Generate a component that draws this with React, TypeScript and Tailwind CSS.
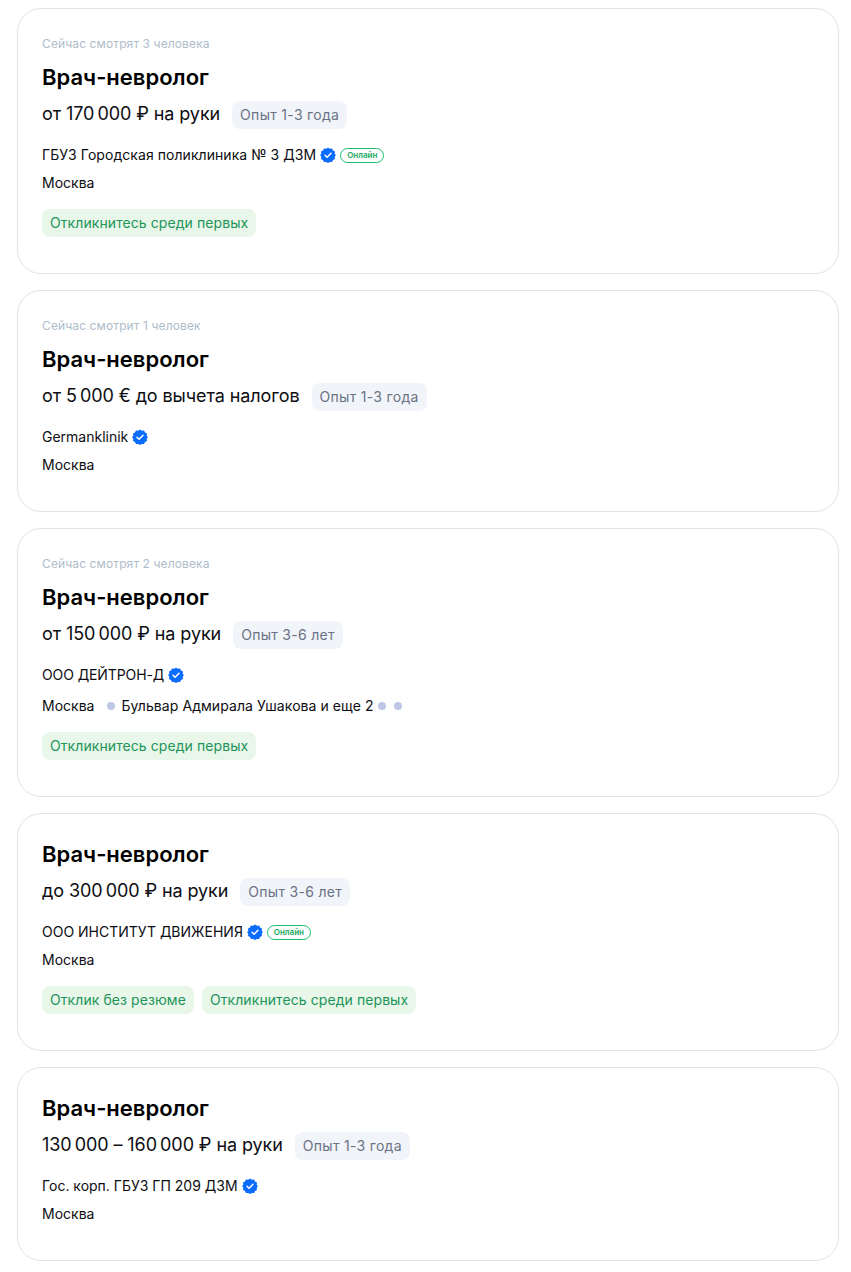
import React from "react";

function Verified() {
  return (
    <svg width="16" height="16" viewBox="0 0 16 16" className="shrink-0 ml-1">
      <path
        d="M8 .6l1.9 1.2 2.2-.2.9 2 2 1-.3 2.2L15.9 8l-1.2 1.9.3 2.2-2 1-.9 2-2.2-.2L8 16l-1.9-1.1-2.2.2-.9-2-2-1 .3-2.2L.1 8l1.2-1.2L1 4.6l2-1 .9-2 2.2.2z"
        fill="#0a6cff"
      />
      <path d="M5 8.2l2.1 2L11 6.3" fill="none" stroke="#fff" strokeWidth="1.5" strokeLinecap="round" strokeLinejoin="round" />
    </svg>
  );
}

function Chip({ children }: { children: React.ReactNode }) {
  return (
    <span className="h-7 px-2 rounded-lg bg-[#e8f7e9] text-[#22945a] text-sm leading-7 tracking-[0.08px]">{children}</span>
  );
}

type Job = {
  views?: string;
  salary: string;
  exp: string;
  company: string;
  companyClass?: string;
  online?: boolean;
  metro?: boolean;
  chips?: string[];
};

const N = "\u2009";

const jobs: Job[] = [
  { views: "Сейчас смотрят 3 человека", salary: `от 170${N}000 ₽ на руки`, exp: "Опыт 1-3 года", company: "ГБУЗ Городская поликлиника № 3 ДЗМ", companyClass: "tracking-[0.06px]", online: true, chips: ["Откликнитесь среди первых"] },
  { views: "Сейчас смотрит 1 человек", salary: `от 5${N}000 € до вычета налогов`, exp: "Опыт 1-3 года", company: "Germanklinik" },
  { views: "Сейчас смотрят 2 человека", salary: `от 150${N}000 ₽ на руки`, exp: "Опыт 3-6 лет", company: "ООО ДЕЙТРОН-Д", companyClass: "tracking-[-0.1px]", metro: true, chips: ["Откликнитесь среди первых"] },
  { salary: `до 300${N}000 ₽ на руки`, exp: "Опыт 3-6 лет", company: "ООО ИНСТИТУТ ДВИЖЕНИЯ", online: true, chips: ["Отклик без резюме", "Откликнитесь среди первых"] },
  { salary: `130${N}000 – 160${N}000 ₽ на руки`, exp: "Опыт 1-3 года", company: "Гос. корп. ГБУЗ ГП 209 ДЗМ" },
];

function Card({ job }: { job: Job }) {
  return (
    <div className="rounded-[24px] border border-[#dce3eb] bg-white px-6 pt-[26px] pb-9">
      {job.views && <div className="text-xs leading-[18px] mb-[10px] text-[#aebdca] tracking-[0.12px]">{job.views}</div>}
      <div className="text-[22px] leading-7 font-semibold text-black">Врач-невролог</div>
      <div className="mt-[10px] flex items-center h-7">
        <span className="text-lg leading-7 mb-[2px] text-[#0d0d12] tracking-[-0.09px]">{job.salary}</span>
        <span className="ml-3 h-7 px-2 rounded-lg bg-[#f1f4f9] text-sm leading-7 text-[#6a7385] tracking-[0.3px]">{job.exp}</span>
      </div>
      <div className="mt-4 flex items-center h-5 text-sm text-[#0d0d12]">
        <span className={job.companyClass}>{job.company}</span>
        <Verified />
        {job.online && (
          <span className="ml-1 h-[15px] w-[44px] rounded-full border border-[#17bf6b] text-[8px] leading-[13px] font-semibold text-center text-[#17a860]">
            Онлайн
          </span>
        )}
      </div>
      {job.metro ? (
        <div className="mt-[11px] flex items-center h-5 text-sm text-[#0d0d12]">
          <span>Москва</span>
          <span className="w-2 h-2 rounded-full bg-[#bcc8e6] ml-[13px] mr-[6px]" />
          <span className="tracking-[0.07px]">Бульвар Адмирала Ушакова и еще 2</span>
          <span className="w-2 h-2 rounded-full bg-[#bcc8e6] ml-1 mr-2" />
          <span className="w-2 h-2 rounded-full bg-[#bcc8e6]" />
        </div>
      ) : (
        <div className="mt-2 h-5 text-sm leading-5 text-[#0d0d12]">Москва</div>
      )}
      {job.chips && (
        <div className="mt-4 flex gap-2 h-7">
          {job.chips.map((c) => (
            <Chip key={c}>{c}</Chip>
          ))}
        </div>
      )}
    </div>
  );
}

export default function App() {
  return (
    <div className="bg-white w-[851px] h-[1272px] pt-2 pl-[17px] pr-3 flex flex-col gap-4 font-['Inter',sans-serif]">
      {jobs.map((j, i) => (
        <Card key={i} job={j} />
      ))}
    </div>
  );
}
